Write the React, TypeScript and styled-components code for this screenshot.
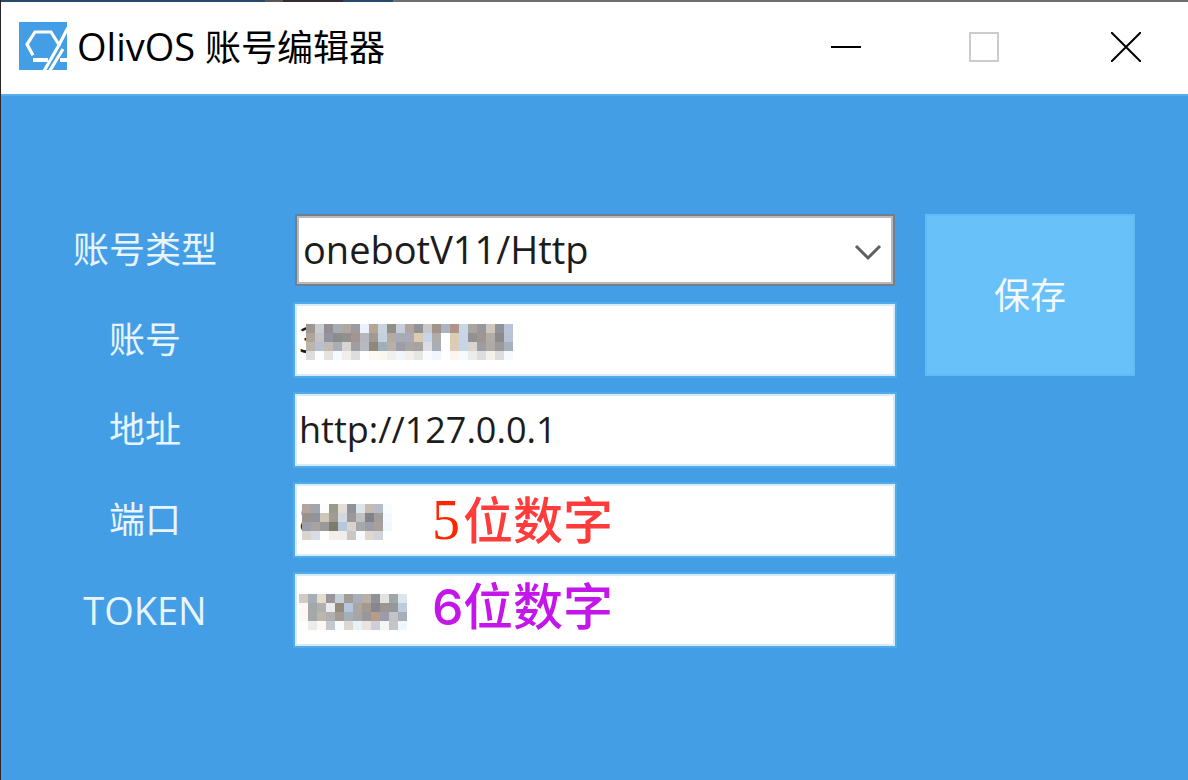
import React from "react";
import styled, { createGlobalStyle } from "styled-components";

const uiFont = `"Open Sans", "Noto Sans CJK SC", sans-serif`;

const GlobalStyle = createGlobalStyle`
  *, *::before, *::after { box-sizing: border-box; }
  html, body, #root { height: 100%; }
  body { margin: 0; font-family: ${uiFont}; }
`;

const Window = styled.div`
  display: flex;
  flex-direction: column;
  min-height: 100%;
  border-left: 1px solid #2b2629;
  background: #449ee5;
`;

const DesktopEdge = styled.div`
  height: 2px;
  background: linear-gradient(
    to right,
    #254a6b 264px,
    #5a5558 264px 282px,
    #332a36 282px 342px,
    #254a6b 342px 392px,
    #706f70 392px
  );
`;

const TitleBar = styled.header`
  display: flex;
  align-items: center;
  height: 94px;
  padding: 0 0 4px 18px;
  gap: 10px;
  background: #ffffff;
  border-bottom: 2px solid #56ade9;
`;

const Title = styled.h1`
  flex: 1;
  margin: 0;
  padding-top: 2px;
  font-size: 36px;
  line-height: 48px;
  font-weight: 400;
  color: #000000;
  white-space: nowrap;
`;

const Latin = styled.span`
  font-size: 38px;
`;

const WindowControls = styled.div`
  display: flex;
  padding-top: 2px;
`;

const ControlButton = styled.button`
  display: flex;
  align-items: center;
  justify-content: center;
  width: 138px;
  height: 86px;
  padding: 0;
  border: 0;
  background: transparent;

  &:last-child {
    width: 124px;
    margin-left: 11px;
  }
`;

const Form = styled.form`
  display: grid;
  grid-template-columns: 240px minmax(0, 1fr) 210px;
  grid-auto-rows: 72px;
  gap: 18px 30px;
  padding: 118px 53px 40px 24px;
`;

const Label = styled.label`
  grid-column: 1;
  font-size: 36px;
  line-height: 72px;
  text-align: center;
  color: #e6f5ff;
`;

const Field = styled.div`
  grid-column: 2;
  position: relative;
`;

const TextBox = styled.input`
  display: block;
  width: 100%;
  height: 72px;
  padding: 0 2px 2px;
  border: 2px solid #d8edfb;
  border-radius: 0;
  outline: 2px solid #52abe8;
  background: #ffffff;
  color: #1c1c1c;
  font-family: ${uiFont};
  font-size: 36px;
  line-height: 48px;
`;

const Select = styled.select`
  display: block;
  appearance: none;
  width: 100%;
  height: 72px;
  padding: 0 48px 2px 6px;
  border: 2px solid #71808c;
  border-radius: 0;
  outline: 0;
  background: #ffffff;
  box-shadow: inset 0 0 0 2px #b9b9b9;
  color: #1c1c1c;
  font-family: ${uiFont};
  font-size: 38px;
  line-height: 48px;
`;

const Chevron = styled.svg`
  position: absolute;
  top: 28px;
  right: 12px;
  pointer-events: none;
`;

const SaveButton = styled.button`
  grid-column: 3;
  grid-row: 1 / span 2;
  padding: 2px 0 0;
  border: 2px solid #5fbbf7;
  background: #68c1f9;
  color: #f2faff;
  font-family: ${uiFont};
  font-size: 36px;
  line-height: 48px;
`;

const MosaicArt = styled.svg<{ $left: number }>`
  position: absolute;
  top: 20px;
  left: ${(p) => p.$left}px;
`;

const Note = styled.span<{ $color: string; $top: number }>`
  position: absolute;
  top: ${(p) => p.$top}px;
  left: 137px;
  display: flex;
  align-items: baseline;
  color: ${(p) => p.$color};
  font-family: Inter, "Noto Sans CJK SC", sans-serif;
  font-size: 50px;
  font-weight: 500;
  line-height: 64px;
  white-space: nowrap;
  pointer-events: none;
`;

const NoteDigit = styled.span<{ $serif?: boolean }>`
  width: 31px;
  ${(p) =>
    p.$serif &&
    `font-family: "Liberation Serif", serif; font-size: 56px; font-weight: 400; color: #ff2600;`}
`;

const CELL = 9;

const accountCells = [
  "a09690 c6cdd5 918f93 a6abb6 aea8a3 9a9aa0 e9f1fa b5a595 c8d3de 918e86 c6cfd8 b0a59c 929297 c8c8c9 9f958d adb3c1 b09488 c6d8e8 a8a59f 98989c cfc6bb 929299 b8c4d8",
  "b0a59c c4c4c4 8f93a3 8b8d8b 929190 a39490 b5b7bb a09a91 c5d1dc b2aaa3 a8abb3 a8abb5 dccbb3 c6d6e8 b0aca9 ffffff dccbb5 c6d6e8 929295 a09590 b0aca8 8b8b8b b8c3d6",
  "bdb5ac b5c0d3 c2bbb3 a8adb8 d8d4ce 9d9da2 b5b9c0 8f8877 9dafbb b8b0a8 9c9da8 a8a5a3 a8a39f dcdde0 a8adb8 ffffff dccbb5 c6d6e8 d8d4ce 9c9ca2 b0aaa5 9a9a9a a9afbc",
  "dddde0 fbfdff e4e3e0 f5faff f0edea dddde0 ffffff fdf8f2 fbf8f2 f0f0ec f0f6fb f5efec e5e5e1 f8fafd f0f6fb ffffff fdf6f0 f6fbff ececec dddde0 f3efea dddde0 f6faff",
];

const portCells = [
  "b0a59e a0a5ae fdfdfd 9a9a8c e2ddd5 8f9299 dbe5ea c5bbb0 b5bdca f8fcff",
  "98938f 93949b cfc6ba a09c92 d3d9e0 9a989a c0c0c0 828288 a19e9e f3f9ff",
  "9ca0ab a8a39f 9a9a9b 7c7c6c b8c8dc d8d4cc a5a8a8 9a9ea8 a8a09c f0f7ff",
  "d8d4ce d8dde5 ffffff f3efea f0edea c8c8c8 fafafa e0d8ce d0d4da ffffff",
];

const tokenCells = [
  "d0cbc3 a8aeb8 e5ddcc 999599 c6d0d8 a39c96 a8aebb b8afa5 90929b e2e2de a0a5a5 dce4ec",
  "fdf8f3 a5a8a8 b0b0ae e9ebed 938a7c b5c5dc aca6a2 a39a94 87888f 9c9693 97979b bccbde",
  "fdf8f3 a5a8a8 c0b5aa b0b0b3 a39a94 a5afb8 a8a6a5 98989c b89c88 9a9cab c2c3c3 a8adb8",
  "ffffff ececea fdf8f3 c5c8cc f6fbff dcd8cf e6f2f8 ebe3de cad0d6 f6f6f6 c4c5c5 eff6ff",
];

/* Pixelated patch that hides a private value. */
function Mosaic({ rows, left }: { rows: string[]; left: number }) {
  const grid = rows.map((row) => row.split(" "));
  return (
    <MosaicArt
      $left={left}
      width={grid[0].length * CELL}
      height={grid.length * CELL}
      shapeRendering="crispEdges"
      aria-hidden="true"
    >
      {grid.map((row, y) =>
        row.map((color, x) => (
          <rect
            key={`${x}-${y}`}
            x={x * CELL}
            y={y * CELL}
            width={CELL}
            height={CELL}
            fill={`#${color}`}
          />
        ))
      )}
    </MosaicArt>
  );
}

function Logo() {
  return (
    <svg width="48" height="48" viewBox="0 0 24 24" aria-hidden="true">
      <rect width="24" height="24" fill="#449ee5" />
      <g fill="none" stroke="#ffffff" strokeWidth="1.6">
        <path d="M7 16.6 L4 11.2 L8 5 H16 L20.4 12" />
        <path d="M7 19 H14.5 M20.5 19 H24" strokeWidth="2" />
        <path d="M24.4 3 L20 11.5 L12.6 24.4" />
        <path d="M22 13.5 L15.4 24.4" />
      </g>
    </svg>
  );
}

export default function App() {
  return (
    <>
      <GlobalStyle />
      <Window>
        <DesktopEdge />
        <TitleBar>
          <Logo />
          <Title>
            <Latin>OlivOS </Latin>账号编辑器
          </Title>
          <WindowControls>
            <ControlButton type="button" aria-label="最小化">
              <svg width="30" height="30" shapeRendering="crispEdges">
                <path d="M0 15H30" stroke="#000000" strokeWidth="2" />
              </svg>
            </ControlButton>
            <ControlButton type="button" aria-label="最大化" disabled>
              <svg width="30" height="30" shapeRendering="crispEdges">
                <rect x="1" y="1" width="28" height="28" fill="none" stroke="#cccccc" strokeWidth="2" />
              </svg>
            </ControlButton>
            <ControlButton type="button" aria-label="关闭">
              <svg width="30" height="30">
                <path d="M0 0L30 30M30 0L0 30" stroke="#000000" strokeWidth="2" />
              </svg>
            </ControlButton>
          </WindowControls>
        </TitleBar>
        <Form onSubmit={(e) => e.preventDefault()}>
          <Label htmlFor="type">账号类型</Label>
          <Field>
            <Select id="type" defaultValue="onebotV11/Http">
              <option>onebotV11/Http</option>
            </Select>
            <Chevron width="30" height="20" aria-hidden="true">
              <path d="M3 4L15 16L27 4" fill="none" stroke="#606060" strokeWidth="3" />
            </Chevron>
          </Field>
          <Label htmlFor="account">账号</Label>
          <Field>
            <TextBox id="account" defaultValue="3" />
            <Mosaic rows={accountCells} left={11} />
          </Field>
          <Label htmlFor="host">地址</Label>
          <Field>
            <TextBox id="host" defaultValue="http://127.0.0.1" />
          </Field>
          <Label htmlFor="port">端口</Label>
          <Field>
            <TextBox id="port" defaultValue="8" />
            <Mosaic rows={portCells} left={7} />
            <Note $color="#ff3b3b" $top={4}>
              <NoteDigit $serif>5</NoteDigit>位数字
            </Note>
          </Field>
          <Label htmlFor="token">
            <Latin>TOKEN</Latin>
          </Label>
          <Field>
            <TextBox id="token" />
            <Mosaic rows={tokenCells} left={4} />
            <Note $color="#c416ea" $top={1}>
              <NoteDigit>6</NoteDigit>位数字
            </Note>
          </Field>
          <SaveButton type="submit">保存</SaveButton>
        </Form>
      </Window>
    </>
  );
}
